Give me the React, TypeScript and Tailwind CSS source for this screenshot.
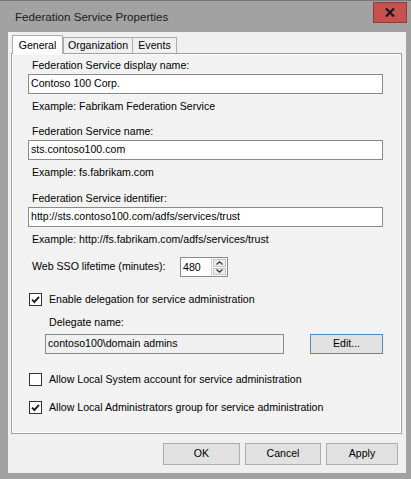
import React from 'react';

const font = "font-['Liberation_Sans',Arial,sans-serif]";

const CheckBox: React.FC<{ checked: boolean; label: string; className?: string }> = ({ checked, label, className = '' }) => (
  <div className={`flex items-center h-[13px] ml-[17px] ${className}`}>
    <div className="w-[13px] h-[13px] border border-[#333333] bg-white flex items-center justify-center shrink-0">
      {checked && (
        <svg width="11" height="11" viewBox="0 0 11 11">
          <path d="M2 5.6 L4.4 8 L9 2.8" fill="none" stroke="#222222" strokeWidth="1.9" />
        </svg>
      )}
    </div>
    <span className="ml-[7px] leading-[13px] whitespace-nowrap">{label}</span>
  </div>
);

const TextBox: React.FC<{ value: string; className?: string; disabled?: boolean }> = ({ value, className = '', disabled }) => (
  <div
    className={`h-[20px] border border-[#8a8a8a] flex items-center pl-[2px] whitespace-nowrap overflow-hidden ${
      disabled ? 'bg-[#f0f0f0]' : 'bg-white'
    } ${className}`}
  >
    {value}
  </div>
);

const Label: React.FC<{ text: string; className?: string }> = ({ text, className = '' }) => (
  <div className={`h-[13px] leading-[13px] ml-[20px] whitespace-nowrap ${className}`}>{text}</div>
);

const Button: React.FC<{ text: string; className?: string; focused?: boolean }> = ({ text, className = '', focused }) => (
  <div
    className={`flex items-center justify-center bg-[#e1e1e1] border ${
      focused ? 'border-[#4d8bc6]' : 'border-[#adadad]'
    } ${className}`}
  >
    {text}
  </div>
);

export default function App() {
  return (
    <div className={`w-[411px] h-[479px] bg-[#a2a2a2] flex flex-col text-[10.6px] text-black ${font}`}>
      {/* title bar */}
      <div className="h-[32px] flex items-start border-t border-[#777777] shrink-0">
        <div className="pl-[15px] pt-[9px] text-[11.6px] leading-[14px] text-[#1b1b1b]">Federation Service Properties</div>
        <div className="ml-auto mr-[4px] mt-[1px] w-[34px] h-[21px] bg-[#c75050] border border-[#8f3b3b] flex items-center justify-center">
          <svg width="10" height="9" viewBox="0 0 10 9">
            <path d="M1 0.5 L9 8.5 M9 0.5 L1 8.5" stroke="#1a1a1a" strokeWidth="2.2" />
          </svg>
        </div>
      </div>

      {/* client area */}
      <div className="ml-[8px] mr-[5px] mb-[6px] flex-1 bg-[#f0f0f0] flex flex-col">
        {/* tabs */}
        <div className="h-[21px] flex items-end pl-[4px] relative z-10">
          <div className="w-[51px] h-[19px] -mb-px bg-white border border-b-0 border-[#adadad] flex items-start justify-center pt-[3px] leading-[13px]">
            General
          </div>
          <div className="w-[70px] h-[16px] bg-[#f0f0f0] border border-b-0 border-[#adadad] flex items-center justify-center leading-[13px]">
            Organization
          </div>
          <div className="-ml-px w-[45px] h-[16px] bg-[#f0f0f0] border border-b-0 border-[#adadad] flex items-center justify-center leading-[13px]">
            Events
          </div>
        </div>

        {/* tab page */}
        <div className="ml-[3px] w-[391px] h-[381px] border border-[#a0a0a0] bg-[#f2f2f2] shadow-[inset_1px_1px_0_#ffffff,inset_-1px_-1px_0_#ffffff] flex flex-col">
          <Label text="Federation Service display name:" className="mt-[5px]" />
          <TextBox value="Contoso 100 Corp." className="mt-[2px] ml-[16px] w-[355px]" />
          <Label text="Example: Fabrikam Federation Service" className="mt-[6px]" />

          <Label text="Federation Service name:" className="mt-[12px]" />
          <TextBox value="sts.contoso100.com" className="mt-[2px] ml-[16px] w-[355px]" />
          <Label text="Example: fs.fabrikam.com" className="mt-[6px]" />

          <Label text="Federation Service identifier:" className="mt-[13px]" />
          <TextBox value="http://sts.contoso100.com/adfs/services/trust" className="mt-[2px] ml-[16px] w-[355px]" />
          <Label text="Example: http://fs.fabrikam.com/adfs/services/trust" className="mt-[6px]" />

          {/* web sso lifetime */}
          <div className="mt-[11px] h-[20px] flex items-center">
            <span className="ml-[20px] w-[148px] whitespace-nowrap">Web SSO lifetime (minutes):</span>
            <div className="w-[48px] h-[20px] border border-[#8a8a8a] bg-white flex">
              <span className="flex-1 pl-[2px] leading-[18px]">480</span>
              <div className="w-[16px] flex flex-col border-l border-[#d0d0d0] p-px gap-px">
                <div className="flex-1 bg-[#ececec] border border-[#c4c4c4] flex items-center justify-center">
                  <svg width="7" height="4" viewBox="0 0 7 4">
                    <path d="M0.5 3.5 L3.5 0.8 L6.5 3.5" fill="none" stroke="#333333" strokeWidth="1.2" />
                  </svg>
                </div>
                <div className="flex-1 bg-[#ececec] border border-[#c4c4c4] flex items-center justify-center">
                  <svg width="7" height="4" viewBox="0 0 7 4">
                    <path d="M0.5 0.5 L3.5 3.2 L6.5 0.5" fill="none" stroke="#333333" strokeWidth="1.2" />
                  </svg>
                </div>
              </div>
            </div>
          </div>

          <CheckBox checked label="Enable delegation for service administration" className="mt-[16px]" />
          <Label text="Delegate name:" className="mt-[10px] ml-[37px]" />
          <div className="mt-[5px] flex items-center">
            <TextBox value="contoso100\domain admins" disabled className="ml-[33px] w-[239px]" />
            <Button text="Edit..." focused className="ml-[26px] w-[73px] h-[20px]" />
          </div>

          <CheckBox checked={false} label="Allow Local System account for service administration" className="mt-[19px]" />
          <CheckBox checked label="Allow Local Administrators group for service administration" className="mt-[15px]" />
        </div>

        {/* dialog buttons */}
        <div className="mt-[9px] flex justify-end pr-[8px] gap-[5px]">
          <Button text="OK" className="w-[77px] h-[22px]" />
          <Button text="Cancel" className="w-[76px] h-[22px]" />
          <Button text="Apply" className="w-[72px] h-[22px]" />
        </div>
      </div>
    </div>
  );
}
